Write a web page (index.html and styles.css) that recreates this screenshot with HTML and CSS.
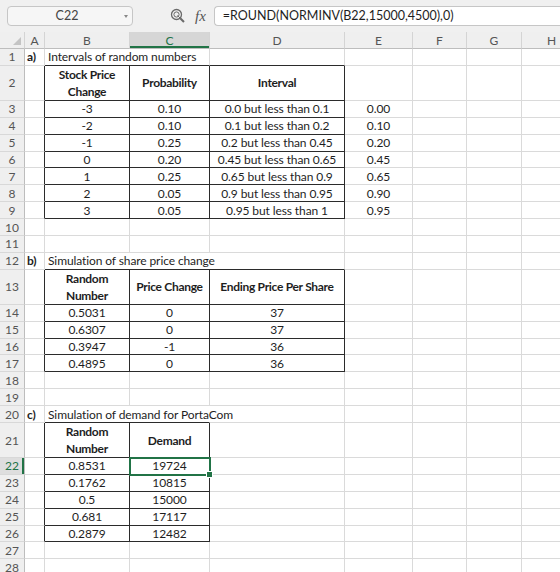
FILE: index.html
```html
<!DOCTYPE html>
<html lang="en">
<head>
    <meta charset="UTF-8">
    <title>PortaCom Simulation</title>
    <link rel="stylesheet" href="styles.css">
</head>
<body>
    <div class="formula-bar">
        <div class="name-box">C22<span class="name-arrow"></span></div>
        <svg class="lookup-icon" width="16" height="16" viewBox="0 0 16 16">
            <circle cx="6.5" cy="6.5" r="5" fill="none" stroke="#6a6a6a" stroke-width="1.3"/>
            <circle cx="6.5" cy="6.5" r="2.6" fill="none" stroke="#6a6a6a" stroke-width="1"/>
            <line x1="7.5" y1="7.5" x2="10" y2="10" stroke="#6a6a6a" stroke-width="1"/>
            <line x1="10.2" y1="10.2" x2="14" y2="14" stroke="#6a6a6a" stroke-width="2"/>
        </svg>
        <span class="fx">fx</span>
        <div class="formula-input">=ROUND(NORMINV(B22,15000,4500),0)</div>
    </div>

    <table class="sheet">
        <colgroup>
            <col class="w-head">
            <col class="w-a">
            <col class="w-b">
            <col class="w-c">
            <col class="w-d">
            <col class="w-e">
            <col class="w-f">
            <col class="w-g">
            <col class="w-h">
        </colgroup>
        <thead>
            <tr>
                <th class="corner"></th>
                <th>A</th><th>B</th><th class="cur-col">C</th><th>D</th><th>E</th><th>F</th><th>G</th><th>H</th>
            </tr>
        </thead>
        <tbody>
            <!-- a) intervals of random numbers -->
            <tr><th>1</th><td class="lbl">a)</td><td colspan="2" class="db">Intervals of random numbers</td><td class="db"></td><td></td><td></td><td></td><td></td></tr>
            <tr class="tall"><th>2</th><td class="dr"></td><td class="box hd">Stock Price Change</td><td class="box hd">Probability</td><td class="box hd">Interval</td><td></td><td></td><td></td><td></td></tr>
            <tr><th>3</th><td class="dr"></td><td class="box c">-3</td><td class="box c">0.10</td><td class="box c">0.0 but less than 0.1</td><td class="c">0.00</td><td></td><td></td><td></td></tr>
            <tr><th>4</th><td class="dr"></td><td class="box c">-2</td><td class="box c">0.10</td><td class="box c">0.1 but less than 0.2</td><td class="c">0.10</td><td></td><td></td><td></td></tr>
            <tr><th>5</th><td class="dr"></td><td class="box c">-1</td><td class="box c">0.25</td><td class="box c">0.2 but less than 0.45</td><td class="c">0.20</td><td></td><td></td><td></td></tr>
            <tr><th>6</th><td class="dr"></td><td class="box c">0</td><td class="box c">0.20</td><td class="box c">0.45 but less than 0.65</td><td class="c">0.45</td><td></td><td></td><td></td></tr>
            <tr><th>7</th><td class="dr"></td><td class="box c">1</td><td class="box c">0.25</td><td class="box c">0.65 but less than 0.9</td><td class="c">0.65</td><td></td><td></td><td></td></tr>
            <tr><th>8</th><td class="dr"></td><td class="box c">2</td><td class="box c">0.05</td><td class="box c">0.9 but less than 0.95</td><td class="c">0.90</td><td></td><td></td><td></td></tr>
            <tr><th>9</th><td class="dr"></td><td class="box c">3</td><td class="box c">0.05</td><td class="box c">0.95 but less than 1</td><td class="c">0.95</td><td></td><td></td><td></td></tr>
            <tr><th>10</th><td></td><td></td><td></td><td></td><td></td><td></td><td></td><td></td></tr>
            <tr><th>11</th><td></td><td></td><td></td><td></td><td></td><td></td><td></td><td></td></tr>

            <!-- b) share price -->
            <tr><th>12</th><td class="lbl">b)</td><td colspan="3" class="db">Simulation of share price change</td><td></td><td></td><td></td><td></td></tr>
            <tr class="tall"><th>13</th><td class="dr"></td><td class="box hd">Random Number</td><td class="box hd">Price Change</td><td class="box hd">Ending Price Per Share</td><td></td><td></td><td></td><td></td></tr>
            <tr><th>14</th><td class="dr"></td><td class="box c">0.5031</td><td class="box c">0</td><td class="box c">37</td><td></td><td></td><td></td><td></td></tr>
            <tr><th>15</th><td class="dr"></td><td class="box c">0.6307</td><td class="box c">0</td><td class="box c">37</td><td></td><td></td><td></td><td></td></tr>
            <tr><th>16</th><td class="dr"></td><td class="box c">0.3947</td><td class="box c">-1</td><td class="box c">36</td><td></td><td></td><td></td><td></td></tr>
            <tr><th>17</th><td class="dr"></td><td class="box c">0.4895</td><td class="box c">0</td><td class="box c">36</td><td></td><td></td><td></td><td></td></tr>
            <tr><th>18</th><td></td><td></td><td></td><td></td><td></td><td></td><td></td><td></td></tr>
            <tr><th>19</th><td></td><td></td><td></td><td></td><td></td><td></td><td></td><td></td></tr>

            <!-- c) demand -->
            <tr><th>20</th><td class="lbl">c)</td><td colspan="2" class="db spill">Simulation of demand for PortaCom</td><td></td><td></td><td></td><td></td><td></td></tr>
            <tr class="tall"><th>21</th><td class="dr"></td><td class="box hd">Random Number</td><td class="box hd">Demand</td><td></td><td></td><td></td><td></td><td></td></tr>
            <tr><th class="cur-row">22</th><td class="dr"></td><td class="box c">0.8531</td><td class="box c sel">19724</td><td></td><td></td><td></td><td></td><td></td></tr>
            <tr><th>23</th><td class="dr"></td><td class="box c">0.1762</td><td class="box c">10815</td><td></td><td></td><td></td><td></td><td></td></tr>
            <tr><th>24</th><td class="dr"></td><td class="box c">0.5</td><td class="box c">15000</td><td></td><td></td><td></td><td></td><td></td></tr>
            <tr><th>25</th><td class="dr"></td><td class="box c">0.681</td><td class="box c">17117</td><td></td><td></td><td></td><td></td><td></td></tr>
            <tr><th>26</th><td class="dr"></td><td class="box c">0.2879</td><td class="box c">12482</td><td></td><td></td><td></td><td></td><td></td></tr>
            <tr><th>27</th><td></td><td></td><td></td><td></td><td></td><td></td><td></td><td></td></tr>
            <tr><th>28</th><td></td><td></td><td></td><td></td><td></td><td></td><td></td><td></td></tr>
        </tbody>
    </table>
</body>
</html>
```

FILE: styles.css
```css
body {
    margin: 0;
    font-family: Lato, "Liberation Sans", sans-serif;
    font-size: 12px;
    color: #1e1e1e;
    background-color: #fff;
    overflow: hidden;
}

/* formula bar */
.formula-bar {
    display: flex;
    align-items: center;
    height: 32px;
    padding-left: 7px;
    background-color: #f0f0f0;
    box-sizing: border-box;
}

.name-box {
    position: relative;
    width: 126px;
    height: 20px;
    box-sizing: border-box;
    border: 1px solid #c6c6c6;
    border-radius: 4px;
    background-color: #f6f6f6;
    color: #444;
    font-size: 12.5px;
    text-align: center;
    line-height: 18px;
    padding-right: 6px;
}

.name-arrow {
    position: absolute;
    right: 4px;
    top: 8px;
    border-left: 2px solid transparent;
    border-right: 2px solid transparent;
    border-top: 3px solid #888;
}

.lookup-icon {
    margin-left: 37px;
}

.fx {
    margin-left: 9px;
    font-family: "Liberation Serif", serif;
    font-style: italic;
    font-size: 15px;
    color: #555;
}

.formula-input {
    flex: 1;
    height: 20px;
    margin-left: 8px;
    padding-left: 8px;
    box-sizing: border-box;
    border: 1px solid #c6c6c6;
    border-right: none;
    border-radius: 4px 0 0 4px;
    background-color: #fff;
    font-size: 12.5px;
    line-height: 18px;
    white-space: nowrap;
}

/* sheet grid */
.sheet {
    border-collapse: separate;
    border-spacing: 0;
    table-layout: fixed;
    width: 582px;
}

.w-head { width: 25px; }
.w-a { width: 20px; }
.w-b { width: 85px; }
.w-c { width: 80px; }
.w-d { width: 135px; }
.w-e { width: 68px; }
.w-f { width: 54px; }
.w-g { width: 55px; }
.w-h { width: 60px; }

.sheet thead tr {
    height: 17px;
}

.sheet tbody tr {
    height: 16.9px;
}

.sheet tbody tr.tall {
    height: 33.8px;
}

.sheet th {
    padding: 0;
    font-weight: normal;
    font-size: 12px;
    color: #555;
    background-color: #efefef;
    text-align: center;
}

.sheet thead th {
    border-right: 1px solid #d4d4d4;
    border-bottom: 1px solid #bdbdbd;
}

.sheet tbody th {
    border-right: 1px solid #bdbdbd;
    border-bottom: 1px solid #d8d8d8;
}

.sheet th.corner {
    position: relative;
}

.corner::after {
    content: "";
    position: absolute;
    right: 3px;
    bottom: 3px;
    border-left: 8px solid transparent;
    border-bottom: 8px solid #c4c4c4;
}

.sheet th.cur-col {
    background-color: #d6d6d6;
    color: #217346;
    box-shadow: inset 0 -2px 0 #217346;
}

.sheet th.cur-row {
    background-color: #dedede;
    color: #217346;
    box-shadow: inset -2px 0 0 #217346;
}

.sheet td {
    padding: 0 3px;
    border-right: 1px solid #dadada;
    border-bottom: 1px solid #dadada;
    white-space: nowrap;
    line-height: 15px;
    letter-spacing: -0.1px;
}

.sheet td.lbl {
    font-weight: bold;
    padding-left: 2px;
}

.sheet td.c {
    text-align: center;
}

.sheet td.hd {
    font-weight: bold;
    text-align: center;
    white-space: normal;
    line-height: 17px;
    letter-spacing: -0.3px;
}

.sheet td.dr {
    border-right-color: #2b2b2b;
}

.sheet td.db {
    border-bottom-color: #2b2b2b;
}

.sheet td.box {
    border-right-color: #2b2b2b;
    border-bottom-color: #2b2b2b;
}

.sheet td.spill {
    border-right-color: transparent;
}

.sheet td.sel {
    position: relative;
    outline: 2px solid #217346;
    outline-offset: -1px;
}

.sel::after {
    content: "";
    position: absolute;
    right: -4px;
    bottom: -4px;
    width: 5px;
    height: 5px;
    background-color: #217346;
    border: 1px solid #fff;
}
```
